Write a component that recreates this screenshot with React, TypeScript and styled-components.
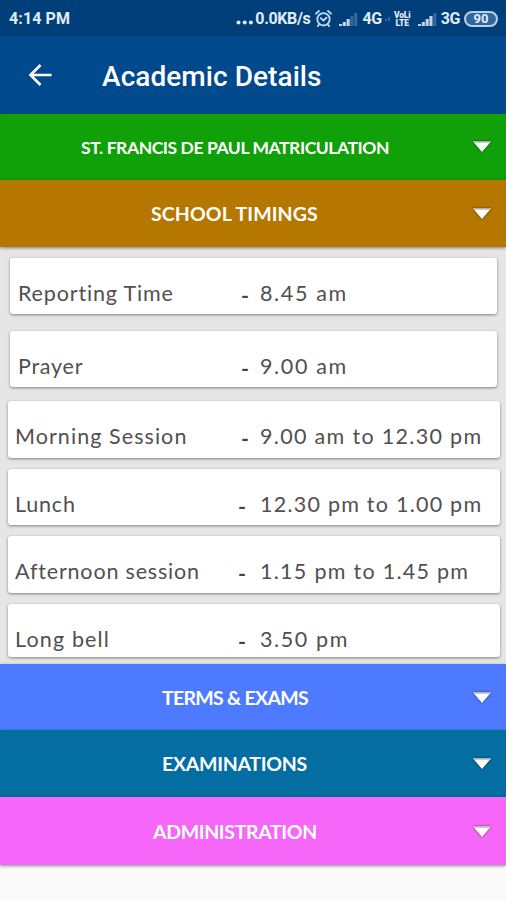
import React from "react";
import styled, { createGlobalStyle } from "styled-components";

const GlobalStyle = createGlobalStyle`
  body { margin: 0; background: #fafafa; }
  * { box-sizing: border-box; }
`;

const Screen = styled.div`
  width: 506px;
  height: 900px;
  overflow: hidden;
  background: #fafafa;
  font-family: Lato, "Open Sans", sans-serif;
`;

const StatusBar = styled.div`
  height: 36px;
  padding: 2px 8px 0 9px;
  display: flex;
  align-items: center;
  justify-content: space-between;
  background: #003f79;
  color: #e2ecf7;
  font: 700 16px/20px Roboto, sans-serif;
`;

const StatusGroup = styled.div`
  display: flex;
  align-items: center;
`;

const StatusText = styled.span<{ $spacing?: number; $gap?: number }>`
  letter-spacing: ${(p) => p.$spacing ?? 0}px;
  margin-left: ${(p) => p.$gap ?? 0}px;
  white-space: nowrap;
`;

const StatusIcon = styled.svg<{ $gap: number }>`
  display: block;
  margin-left: ${(p) => p.$gap}px;
`;

const Volte = styled.span`
  width: 17px;
  margin-left: 4px;
  display: flex;
  flex-direction: column;
  align-items: center;
  font: 900 8.5px/8px Roboto, sans-serif;
  letter-spacing: -0.2px;
`;

const Battery = styled.span`
  width: 34px;
  height: 16px;
  margin-left: 4px;
  border: 2px solid #b9cfe6;
  border-radius: 8px;
  background: #2f679d;
  display: flex;
  align-items: center;
  justify-content: center;
  font: 700 13px/12px Roboto, sans-serif;
`;

const AppBar = styled.header`
  height: 78px;
  padding-left: 28px;
  display: flex;
  align-items: center;
  background: #00498d;
  color: #fff;
`;

const Title = styled.h1`
  margin: 4px 0 0 50px;
  font: 500 28px/36px Roboto, sans-serif;
  letter-spacing: 0.06px;
`;

const SectionBar = styled.button<{ $color: string; $height: number }>`
  position: relative;
  width: 100%;
  height: ${(p) => p.$height}px;
  border: 0;
  padding: 1px 36px 0 0;
  display: flex;
  align-items: center;
  background: ${(p) => p.$color};
  box-shadow: 0 1px 3px rgba(0, 0, 0, 0.45);
  color: #fff;
  font-family: inherit;
`;

const SectionLabel = styled.span<{ $size: number; $spacing: number; $left: number }>`
  flex: 1;
  padding-left: ${(p) => p.$left}px;
  text-align: left;
  white-space: nowrap;
  font-size: ${(p) => p.$size}px;
  line-height: 26px;
  font-weight: 700;
  letter-spacing: ${(p) => p.$spacing}px;
`;

const Caret = styled.svg<{ $top: number }>`
  position: absolute;
  right: 12px;
  top: ${(p) => p.$top}px;
  overflow: visible;
  filter: drop-shadow(0 0 1px rgba(0, 0, 0, 0.6));
`;

const TimingList = styled.div`
  height: 417px;
  padding-top: 11px;
  background: #e6e6e6;
`;

const Card = styled.div<{ $narrow: boolean; $height: number; $gap: number }>`
  height: ${(p) => p.$height}px;
  margin: 0 ${(p) => (p.$narrow ? "9px" : "6px")} ${(p) => p.$gap}px ${(p) => (p.$narrow ? "10px" : "8px")};
  padding: 22px 0 0 ${(p) => (p.$narrow ? 8 : 7)}px;
  display: flex;
  border-radius: 3px;
  background: #fff;
  box-shadow: 0 1px 3px rgba(0, 0, 0, 0.45);
  color: #505050;
  font-size: 21.5px;
  line-height: 26px;
  white-space: nowrap;
`;

const CardLabel = styled.span<{ $width: number; $spacing: number }>`
  width: ${(p) => p.$width}px;
  letter-spacing: ${(p) => p.$spacing}px;
`;

const Dash = styled.span<{ $width: number }>`
  width: ${(p) => p.$width}px;
  padding-top: 2px;
  font-weight: 700;
  color: #444;
`;

const Value = styled.span<{ $spacing: number }>`
  letter-spacing: ${(p) => p.$spacing}px;
`;

const timings = [
  { label: "Reporting Time", value: "8.45 am", narrow: true, height: 56, gap: 17, ls: 0.85, vs: 1.65, dash: 241 },
  { label: "Prayer", value: "9.00 am", narrow: true, height: 56, gap: 14, ls: 0.75, vs: 1.65, dash: 241 },
  { label: "Morning Session", value: "9.00 am to 12.30 pm", narrow: false, height: 57, gap: 11, ls: 1.07, vs: 1.32, dash: 241 },
  { label: "Lunch", value: "12.30 pm to 1.00 pm", narrow: false, height: 56, gap: 11, ls: 0.8, vs: 1.24, dash: 238 },
  { label: "Afternoon session", value: "1.15 pm to 1.45 pm", narrow: false, height: 57, gap: 11, ls: 0.82, vs: 1.28, dash: 238 },
  { label: "Long bell", value: "3.50 pm", narrow: false, height: 53, gap: 0, ls: 1.15, vs: 1.6, dash: 238 },
];

function Signal({ gap, level }: { gap: number; level: number }) {
  return (
    <StatusIcon $gap={gap} width="19" height="14" viewBox="0 0 19 14">
      {[2, 4, 7, 10, 13].map((h, i) => (
        <rect key={h} x={i * 3.8} y={14 - h} width="3.1" height={h} fill={i < level ? "#c3d5e8" : "#376a9c"} />
      ))}
    </StatusIcon>
  );
}

function Section({ color, height, size = 19.5, spacing, left, caretTop = 25, children }: {
  color: string; height: number; size?: number; spacing: number; left: number; caretTop?: number; children: React.ReactNode;
}) {
  return (
    <SectionBar $color={color} $height={height}>
      <SectionLabel $size={size} $spacing={spacing} $left={left}>{children}</SectionLabel>
      <Caret $top={caretTop} width="24" height="16" viewBox="0 0 24 16">
        <path d="M3 3.5H21L12 14Z" fill="#fff" />
        <path d="M3 3.5H21L20 4.8H4Z" fill="#bbb" />
      </Caret>
    </SectionBar>
  );
}

export default function App() {
  return (
    <Screen>
      <GlobalStyle />
      <StatusBar>
        <StatusText $spacing={0.1}>4:14 PM</StatusText>
        <StatusGroup>
          <StatusIcon $gap={0} width="18" height="16" viewBox="0 0 18 16">
            {[2.5, 8.7, 14.9].map((x) => <circle key={x} cx={x} cy="11.5" r="2" fill="#e2ecf7" />)}
          </StatusIcon>
          <StatusText $gap={1} $spacing={-0.35}>0.0KB/s</StatusText>
          <StatusIcon $gap={5} width="17" height="18" viewBox="0 0 17 18" fill="none" stroke="#c9daec" strokeWidth="1.8" strokeLinecap="round">
            <circle cx="8.5" cy="9.3" r="6.2" />
            <path d="M1 3.7 4 1M16 3.7 13 1M5.8 8.2l2.7 2.3 3-2.8M4.2 14.5l-1.4 1.6M12.8 14.5l1.4 1.6" />
          </StatusIcon>
          <Signal gap={7} level={3} />
          <StatusText $gap={4} $spacing={-0.4}>4G</StatusText>
          <StatusIcon $gap={3} width="5" height="6" viewBox="0 0 5 6"><path d="M1 5V3M4 5V1" stroke="#376a9c" strokeWidth="2" /></StatusIcon>
          <Volte><span>VoLi</span><span>LTE</span></Volte>
          <Signal gap={7} level={4} />
          <StatusText $gap={4} $spacing={-0.4}>3G</StatusText>
          <Battery>90</Battery>
        </StatusGroup>
      </StatusBar>
      <AppBar>
        <svg width="24" height="24" viewBox="0 0 24 24" fill="none" stroke="#fff" strokeWidth="2.6">
          <path d="M23.5 12H3M12.5 2 2.5 12 12.5 22" />
        </svg>
        <Title>Academic Details</Title>
      </AppBar>
      <Section color="#10a007" height={66} size={17.5} spacing={-0.43} left={81} caretTop={24}>ST. FRANCIS DE PAUL MATRICULATION</Section>
      <Section color="#b57700" height={67} spacing={0.1} left={151}>SCHOOL TIMINGS</Section>
      <TimingList>
        {timings.map((t) => (
          <Card key={t.label} $narrow={t.narrow} $height={t.height} $gap={t.gap}>
            <CardLabel $width={t.dash - (t.narrow ? 18 : 15)} $spacing={t.ls}>{t.label}</CardLabel>
            <Dash $width={260 - t.dash}>-</Dash>
            <Value $spacing={t.vs}>{t.value}</Value>
          </Card>
        ))}
      </TimingList>
      <Section color="#4e7aff" height={66} spacing={-0.7} left={162}>TERMS &amp; EXAMS</Section>
      <Section color="#046da2" height={67} spacing={-0.27} left={162}>EXAMINATIONS</Section>
      <Section color="#f566f9" height={68} spacing={-0.35} left={153} caretTop={26}>ADMINISTRATION</Section>
    </Screen>
  );
}
